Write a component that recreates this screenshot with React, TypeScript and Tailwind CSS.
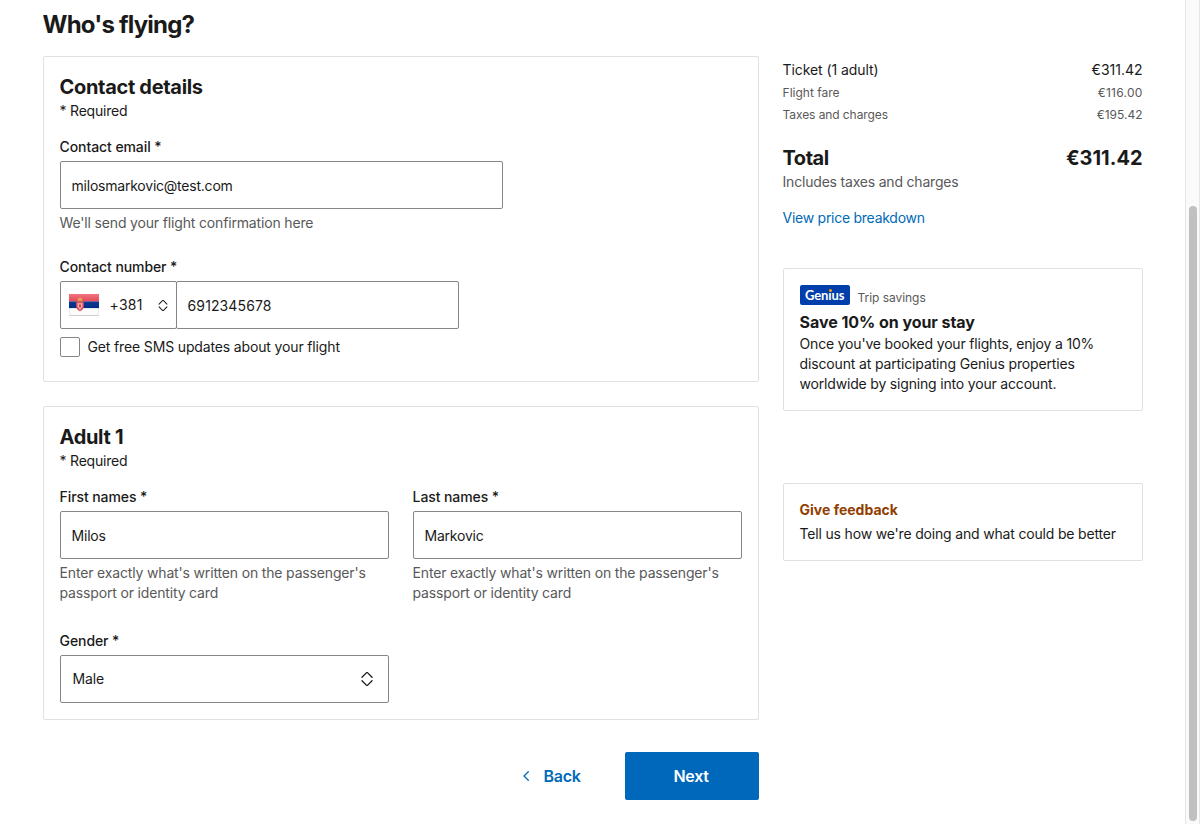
import type { ReactNode } from "react";

function Chevrons({ className }: { className: string }) {
  return (
    <svg viewBox="0 0 12 14" className={className} fill="none" stroke="#1a1a1a" strokeLinecap="round" strokeLinejoin="round">
      <path d="M1 5.2 5.3.9a1 1 0 0 1 1.4 0L11 5.2M1 8.8l4.3 4.3a1 1 0 0 0 1.4 0L11 8.8" strokeWidth="1.3" />
    </svg>
  );
}

function SerbianFlag() {
  return (
    <svg viewBox="0 0 30 22" className="h-[22px] w-[30px] shrink-0">
      <defs>
        <linearGradient id="red" x1="0" y1="0" x2="0" y2="1">
          <stop offset="0" stopColor="#ed7480" />
          <stop offset="1" stopColor="#e64a57" />
        </linearGradient>
        <linearGradient id="blue" x1="0" y1="0" x2="0" y2="1">
          <stop offset="0" stopColor="#0f3a94" />
          <stop offset="1" stopColor="#022b86" />
        </linearGradient>
      </defs>
      <rect width="30" height="22" rx="1" fill="#cfcfcf" />
      <rect y="0" width="30" height="7.6" rx="0.8" fill="url(#red)" />
      <rect y="7.5" width="30" height="6.8" fill="url(#blue)" />
      <rect x="0.3" y="14.2" width="29.4" height="6.8" fill="#fbfbfb" />
      <path d="M8.6 5.6c0-1.4 1.2-2 2.4-2.2 1.2.2 2.4.8 2.4 2.2l-.7 2H9.3Z" fill="#e6a052" />
      <path d="M7.2 7.4h7.6v5c0 2.2-1.7 4-3.8 4.9-2.1-.9-3.8-2.7-3.8-4.9Z" fill="#e24a55" />
      <path d="m8.3 8.2 1.6 1.4 1.1-1.2 1.1 1.2 1.6-1.4-.3 5-1.2 1-.4 1.6h-1.6l-.4-1.6-1.2-1Z" fill="#eda9aa" />
      <path d="M10 10.4h2v2.4l-1 .9-1-.9Z" fill="#e0404d" />
    </svg>
  );
}

function Label({ children }: { children: ReactNode }) {
  return <div className="text-sm leading-5 font-medium tracking-[-0.006em]">{children}</div>;
}

function Help({ children }: { children: ReactNode }) {
  return <div className="mt-1 text-sm leading-5 tracking-[-0.0115em] text-[#595959]">{children}</div>;
}

function TextBox({ children }: { children: ReactNode }) {
  return (
    <div className="mt-1 flex h-12 items-center rounded-[2px] border border-[#868686] px-[11px] pt-0.5 text-sm tracking-[-0.016em]">
      {children}
    </div>
  );
}

function SectionTitle({ children }: { children: ReactNode }) {
  return (
    <>
      <h2 className="text-xl leading-7 font-bold tracking-[-0.016em]">{children}</h2>
      <div className="text-sm leading-5 tracking-[-0.015em]">* Required</div>
    </>
  );
}

function NameField({ label, value }: { label: string; value: string }) {
  return (
    <div>
      <Label>{label}</Label>
      <TextBox>{value}</TextBox>
      <Help>
        Enter exactly what's written on the passenger's
        <br />
        passport or identity card
      </Help>
    </div>
  );
}

export default function App() {
  return (
    <div className="flex h-[824px] w-[1200px] overflow-hidden bg-white font-['Inter',sans-serif] text-[#1a1a1a]">
      <div className="w-[1185px] shrink-0 pt-[9px] pl-[42.55px]">
        <h1 className="text-2xl leading-8 font-bold tracking-[-0.033em]">Who's flying?</h1>
        <div className="mt-[15px] flex items-start gap-6">
          <main className="w-[716px]">
            <section className="h-[326px] rounded-[2px] border border-[#e0e0e0] p-4">
              <SectionTitle>Contact details</SectionTitle>
              <div className="mt-4 w-[443px]">
                <Label>Contact email *</Label>
                <TextBox>milosmarkovic@test.com</TextBox>
                <Help>We'll send your flight confirmation here</Help>
              </div>
              <div className="mt-6">
                <Label>Contact number *</Label>
                <div className="mt-1 flex h-12 w-[399px] text-sm">
                  <div className="flex w-[117px] items-center rounded-[2px] border border-[#868686] pl-2">
                    <SerbianFlag />
                    <span className="ml-[11px] w-[48px] tracking-[0.02em]">+381</span>
                    <Chevrons className="h-[11px] w-[10px]" />
                  </div>
                  <div className="-ml-px flex flex-1 items-center rounded-[2px] border border-[#868686] pt-0.5 pl-[11px] tracking-[0.008em]">
                    6912345678
                  </div>
                </div>
              </div>
              <div className="mt-2 flex items-center">
                <div className="size-5 rounded-[2px] border border-[#868686]" />
                <span className="ml-2 text-sm leading-5 tracking-[-0.0105em]">Get free SMS updates about your flight</span>
              </div>
            </section>

            <section className="mt-6 h-[314px] rounded-[2px] border border-[#e0e0e0] p-4">
              <SectionTitle>Adult 1</SectionTitle>
              <div className="mt-4 grid grid-cols-[329px_329px] gap-x-6">
                <NameField label="First names *" value="Milos" />
                <NameField label="Last names *" value="Markovic" />
              </div>
              <div className="mt-7 w-[329px]">
                <Label>Gender *</Label>
                <div className="mt-1 flex h-12 items-center justify-between rounded-[2px] border border-[#868686] pr-[15px] pl-3 text-sm tracking-[-0.012em]">
                  Male
                  <Chevrons className="h-[14px] w-[12px]" />
                </div>
              </div>
            </section>

            <div className="mt-8 flex h-12 items-center justify-end text-base font-semibold">
              <button className="flex items-center tracking-[-0.018em] text-[#006ab8]">
                <svg viewBox="0 0 6 10" className="mr-[15px] h-[10px] w-[6px]" fill="none" stroke="currentColor" strokeWidth="1.3" strokeLinecap="round" strokeLinejoin="round">
                  <path d="M5.3.7 1 5l4.3 4.3" />
                </svg>
                Back
              </button>
              <button className="ml-[44px] h-12 w-[134px] rounded-[2px] bg-[#0068ba] pr-px tracking-[-0.018em] text-white">Next</button>
            </div>
          </main>

          <aside className="w-[360px] pt-1">
            <div className="flex justify-between text-sm leading-5">
              <span className="tracking-[-0.006em]">Ticket (1 adult)</span>
              <span>€311.42</span>
            </div>
            <div className="mt-1 flex justify-between text-xs leading-[18px] text-[#595959]">
              <span>Flight fare</span>
              <span className="tracking-[0.02em]">€116.00</span>
            </div>
            <div className="mt-1 flex justify-between text-xs leading-[18px] text-[#595959]">
              <span className="tracking-[-0.007em]">Taxes and charges</span>
              <span>€195.42</span>
            </div>
            <div className="mt-5 flex justify-between text-xl leading-7 font-bold">
              <span className="tracking-[-0.024em]">Total</span>
              <span>€311.42</span>
            </div>
            <div className="text-sm leading-5 tracking-[-0.014em] text-[#595959]">Includes taxes and charges</div>
            <div className="mt-4 text-sm leading-5 tracking-[-0.019em] text-[#006ab8]">View price breakdown</div>

            <section className="mt-10 h-[143px] rounded-[2px] border border-[#e0e0e0] p-4">
              <div className="flex h-5 items-start">
                <div className="relative h-5 w-[50px] rounded-[2px] bg-[#003fab] pl-[5.5px] font-['Lato','Inter',sans-serif] text-[13px] leading-5 font-bold tracking-[-0.01em] text-white">
                  Genıus
                  <span className="absolute top-[4px] left-[29px] size-[3px] rounded-full bg-[#ffa500]" />
                </div>
                <span className="mt-[5px] ml-2 text-xs leading-4 tracking-[-0.004em] text-[#595959]">Trip savings</span>
              </div>
              <h3 className="mt-[5px] text-base leading-6 font-bold tracking-[-0.003em]">Save 10% on your stay</h3>
              <p className="text-sm leading-5 tracking-[-0.013em]">
                Once you've booked your flights, enjoy a 10%
                <br />
                <span className="tracking-[-0.0105em]">discount at participating Genius properties</span>
                <br />
                worldwide by signing into your account.
              </p>
            </section>

            <section className="mt-[72px] h-[78px] rounded-[2px] border border-[#e0e0e0] p-4">
              <div className="text-sm leading-5 font-bold text-[#923e01]">Give feedback</div>
              <p className="mt-1 text-sm leading-5 tracking-[-0.0125em]">Tell us how we're doing and what could be better</p>
            </section>
          </aside>
        </div>
      </div>
      <div className="flex w-[15px] flex-col border-x border-[#e6e6e6] bg-[#fafafa] pt-[206px] pl-[3px]">
        <div className="h-[615px] w-2 rounded-full bg-[#c0c0c0]" />
      </div>
    </div>
  );
}
